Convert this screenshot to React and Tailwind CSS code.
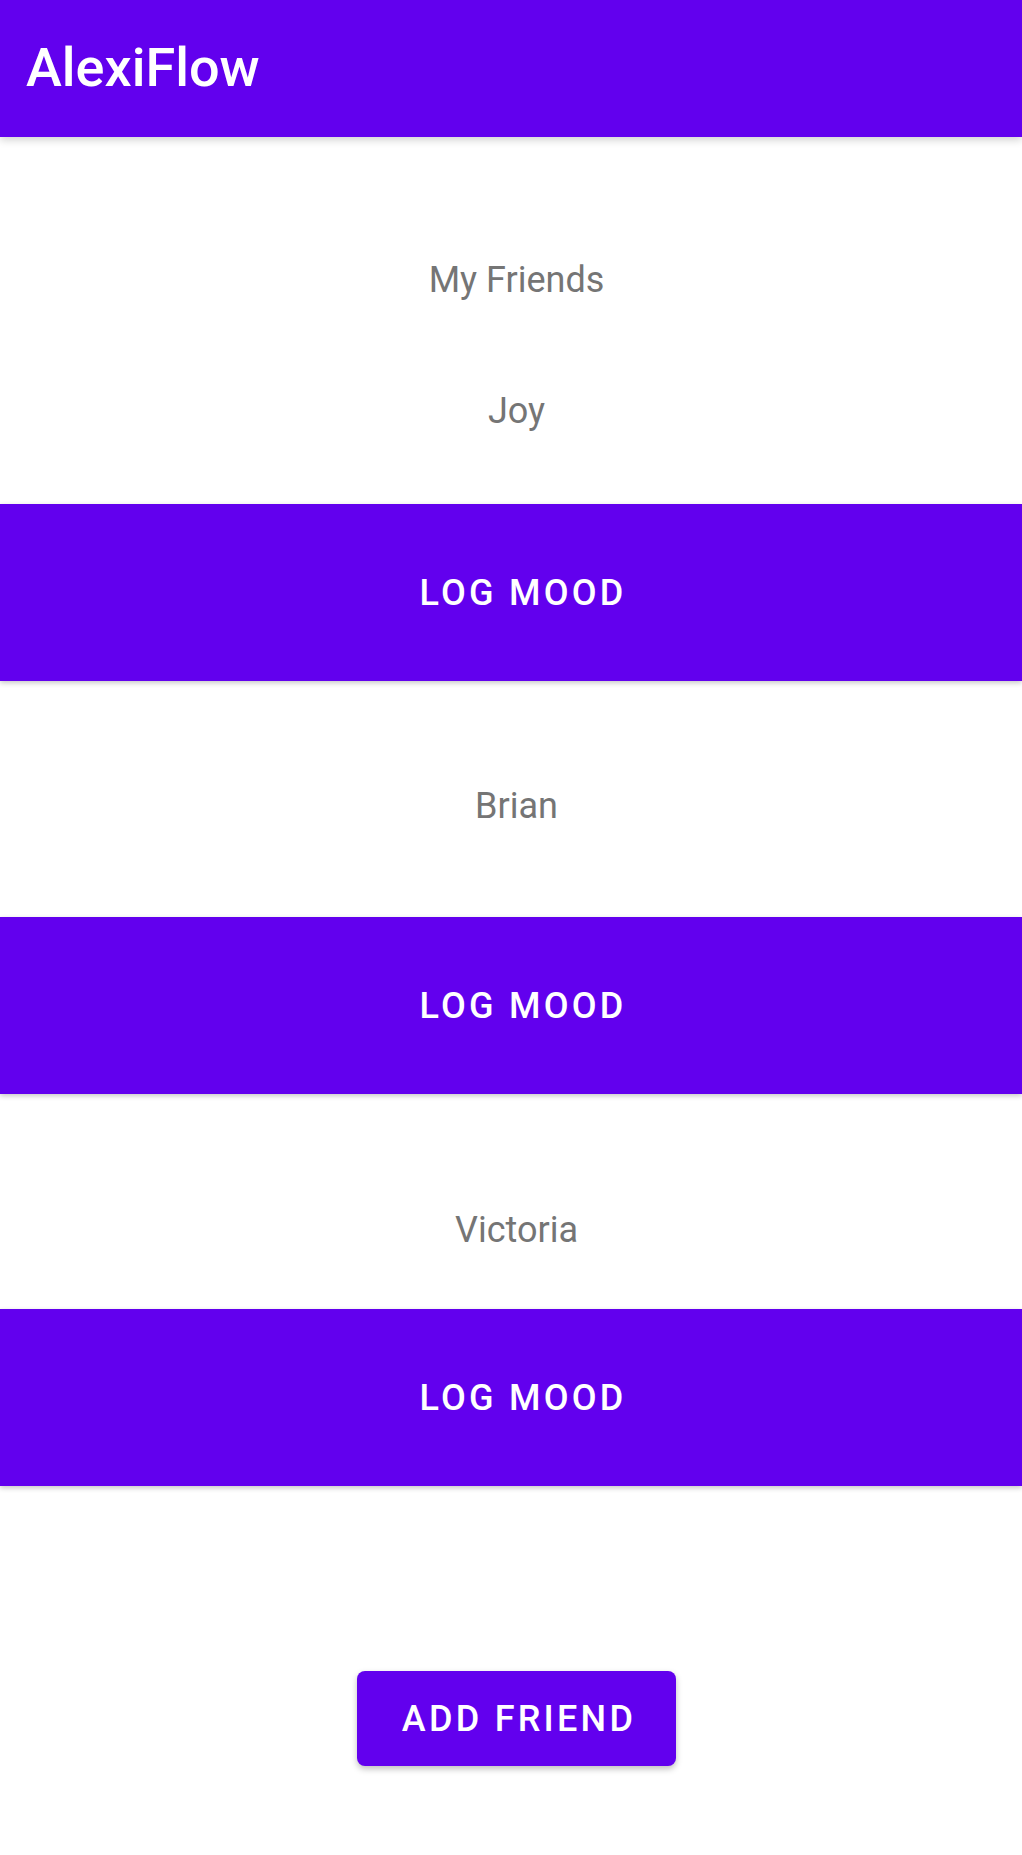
const friends = [
    { name: 'Joy', gapTop: 'mt-[89px]', gapButton: 'mt-[72px]' },
    { name: 'Brian', gapTop: 'mt-[104px]', gapButton: 'mt-[90px]' },
    { name: 'Victoria', gapTop: 'mt-[115px]', gapButton: 'mt-[58px]' },
]

export default function App() {
    return (
        <div className="bg-white min-h-screen font-['Roboto','Liberation_Sans',sans-serif]">
            {/* Toolbar */}
            <header className="h-[137px] bg-[#6200ee] flex items-center pl-[26px] shadow-[0_3px_8px_rgba(0,0,0,0.18)] relative z-10">
                <h1 className="text-white text-[54px] font-medium -mt-[3px]">AlexiFlow</h1>
            </header>

            <main className="flex flex-col pb-[88px]">
                <p className="mt-[122px] text-center pl-[11px] text-[36px] leading-[42px] text-[#757575]">
                    My Friends
                </p>

                {friends.map((f) => (
                    <div key={f.name} className="flex flex-col">
                        <p className={`${f.gapTop} text-center pl-[11px] text-[36px] leading-[42px] text-[#757575]`}>
                            {f.name}
                        </p>
                        <button
                            className={`${f.gapButton} h-[177px] w-full bg-[#6200ee] text-white text-[36px] font-medium uppercase tracking-[0.09em] pl-[24px] shadow-[0_2px_5px_rgba(0,0,0,0.22)]`}
                        >
                            Log Mood
                        </button>
                    </div>
                ))}

                <div className="mt-[185px] flex justify-center pl-[11px]">
                    <button className="h-[95px] w-[319px] rounded-[8px] bg-[#6200ee] text-white text-[36px] font-medium uppercase tracking-[0.09em] pl-[5px] shadow-[0_3px_6px_rgba(0,0,0,0.25)]">
                        Add Friend
                    </button>
                </div>
            </main>
        </div>
    )
}
